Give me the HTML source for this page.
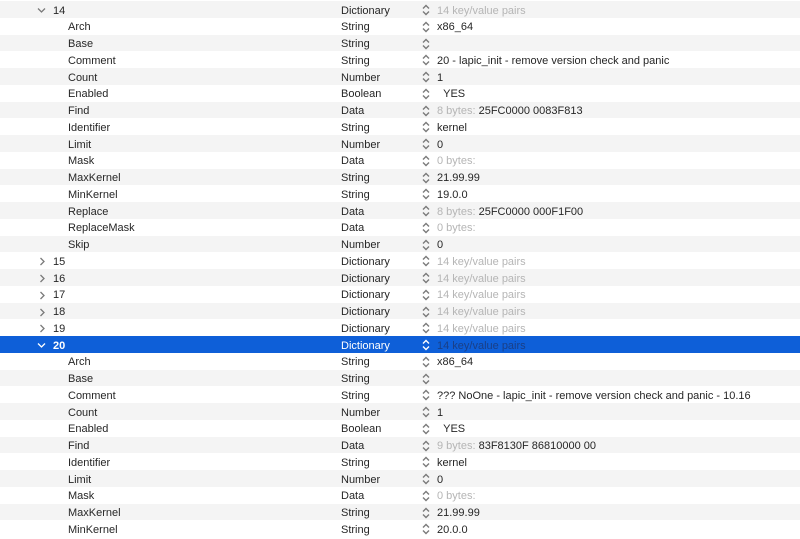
<!DOCTYPE html>
<html><head><style>
body{margin:0;width:800px;height:536px;overflow:hidden;background:#fff;font-family:"Liberation Sans",Arial,sans-serif;font-size:11px;color:#262626}
.r{position:absolute;left:0;width:800px;height:16.75px;line-height:17px}
.g{background:#f4f4f4}
.s{background:#0e5fd8;color:#fff}
.r span{position:absolute;top:1.5px;white-space:nowrap}
.k{left:68px}.p{left:53px}
.t{left:341px}
.i{left:421px;top:0;width:10px;height:17px}
.v{left:437px}
.d{color:#b5b5b5}
.s .d{color:#1a3f86}
</style></head><body>
<div id="w"></div>
<script>
var rows=[
["p","14","Dictionary","d","14 key/value pairs","v"],
["k","Arch","String","","x86_64"],
["k","Base","String","",""],
["k","Comment","String","","20 - lapic_init - remove version check and panic"],
["k","Count","Number","","1"],
["k","Enabled","Boolean","","&nbsp;&nbsp;YES"],
["k","Find","Data","b","8 bytes:|25FC0000 0083F813"],
["k","Identifier","String","","kernel"],
["k","Limit","Number","","0"],
["k","Mask","Data","d","0 bytes:"],
["k","MaxKernel","String","","21.99.99"],
["k","MinKernel","String","","19.0.0"],
["k","Replace","Data","b","8 bytes:|25FC0000 000F1F00"],
["k","ReplaceMask","Data","d","0 bytes:"],
["k","Skip","Number","","0"],
["p","15","Dictionary","d","14 key/value pairs",">"],
["p","16","Dictionary","d","14 key/value pairs",">"],
["p","17","Dictionary","d","14 key/value pairs",">"],
["p","18","Dictionary","d","14 key/value pairs",">"],
["p","19","Dictionary","d","14 key/value pairs",">"],
["p","20","Dictionary","d","14 key/value pairs","v"],
["k","Arch","String","","x86_64"],
["k","Base","String","",""],
["k","Comment","String","","??? NoOne - lapic_init - remove version check and panic - 10.16"],
["k","Count","Number","","1"],
["k","Enabled","Boolean","","&nbsp;&nbsp;YES"],
["k","Find","Data","b","9 bytes:|83F8130F 86810000 00"],
["k","Identifier","String","","kernel"],
["k","Limit","Number","","0"],
["k","Mask","Data","d","0 bytes:"],
["k","MaxKernel","String","","21.99.99"],
["k","MinKernel","String","","20.0.0"]];
var h="";
rows.forEach(function(r,n){
var cls="r"+(n==20?" s":(n%2==0?" g":""));
var top=1+n*16.75;
var col=n==20?"#fff":"#7a7a7a";
var ic='<svg class="i" style="position:absolute" viewBox="0 0 10 17"><path d="M2 7.5 L5 4.5 L8 7.5 M2 10.5 L5 13.5 L8 10.5" fill="none" stroke="'+col+'" stroke-width="1.4"/></svg>';
var chev="";
if(r[5]=="v")chev='<svg style="position:absolute;left:37px;top:6px" width="9" height="7"><path d="M1 1.5 L4.5 5 L8 1.5" fill="none" stroke="'+col+'" stroke-width="1.3"/></svg>';
if(r[5]==">")chev='<svg style="position:absolute;left:39px;top:5px" width="7" height="9"><path d="M1.5 1 L5 4.5 L1.5 8" fill="none" stroke="'+col+'" stroke-width="1.3"/></svg>';
var v=r[4];
if(r[3]=="b"){var a=v.split("|");v='<span class="d" style="position:static">'+a[0]+'</span> '+a[1];}
else if(r[3]=="d")v='<span class="d" style="position:static">'+v+'</span>';
h+='<div class="'+cls+'" style="top:'+top+'px">'+chev+'<span class="'+r[0]+'"'+(n==20?' style="font-weight:bold"':'')+'>'+r[1]+'</span><span class="t">'+r[2]+'</span>'+ic+'<span class="v">'+v+'</span></div>';
});
document.getElementById("w").innerHTML=h;
</script>
</body></html>
